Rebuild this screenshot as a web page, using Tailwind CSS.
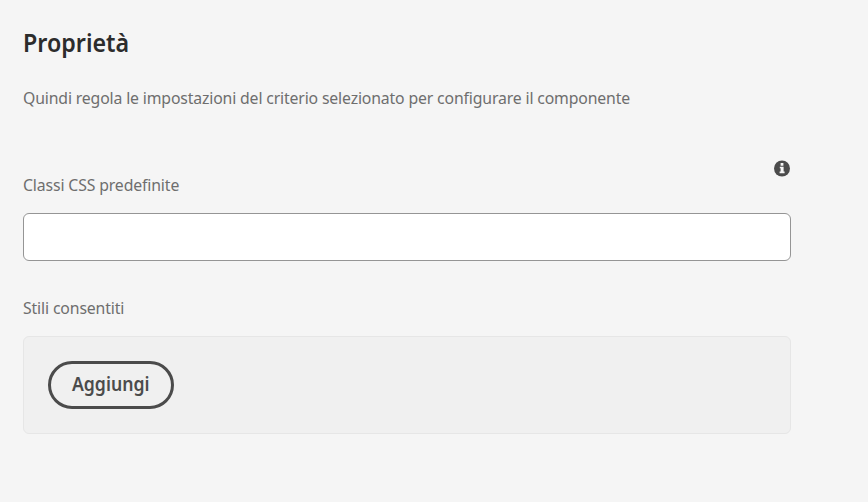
<!DOCTYPE html>
<html lang="it">
<head>
<meta charset="utf-8">
<title>Proprietà</title>
<script src="https://cdn.jsdelivr.net/npm/@tailwindcss/browser@4"></script>
</head>
<body class="bg-[#f5f5f5] font-['Noto_Sans',sans-serif] text-[#6e6e6e]">
<main class="w-[791px] h-[502px] pl-[23px] pt-[28px] flex flex-col">
  <h1 class="h-[32px] leading-[28px] text-[25px] font-semibold text-[#2c2c2c] whitespace-nowrap"><span class="inline-block origin-left scale-x-93">Proprietà</span></h1>
  <p class="mt-[26px] h-6 leading-6 text-[17px] whitespace-nowrap"><span class="inline-block origin-left scale-x-93 -ml-[0.4px] tracking-[-0.17px]">Quindi regola le impostazioni del criterio selezionato per configurare il componente</span></p>
  <div class="mt-[50px] h-[53px] flex justify-between">
    <label for="classi" class="mt-[13px] h-6 leading-6 text-[17px] whitespace-nowrap"><span class="inline-block origin-left scale-x-93 -ml-[0.4px] tracking-[-0.15px]">Classi CSS predefinite</span></label>
    <svg class="w-4 h-[17px] mr-[1px]" viewBox="0 0 16 17"><circle cx="8" cy="8.5" r="8" fill="#4b4b4b"/><path fill="#f5f5f5" d="M6.6 3h2.8v2.8H6.6zM5.8 6.8h3.8v4.8h1v1.7H5.6v-1.7h1V8.3h-.8z"/></svg>
  </div>
  <input id="classi" type="text" class="block w-full h-12 shrink-0 rounded-[6px] border border-[#959595] bg-white outline-none px-4">
  <h2 class="mt-[35px] h-6 leading-6 text-[17px] whitespace-nowrap"><span class="inline-block origin-left scale-x-93 -ml-[0.4px] tracking-[-0.15px]">Stili consentiti</span></h2>
  <section class="mt-[16px] h-[98px] shrink-0 rounded-[6px] border border-[#e6e6e6] bg-[#f0f0f0] p-6">
    <button class="w-[126px] h-12 rounded-full border-3 border-[#4b4b4b] text-[#4b4b4b] text-[19px] font-semibold leading-[40px] pb-[2px] flex justify-center items-center"><span class="inline-block scale-x-93">Aggiungi</span></button>
  </section>
</main>
</body>
</html>
